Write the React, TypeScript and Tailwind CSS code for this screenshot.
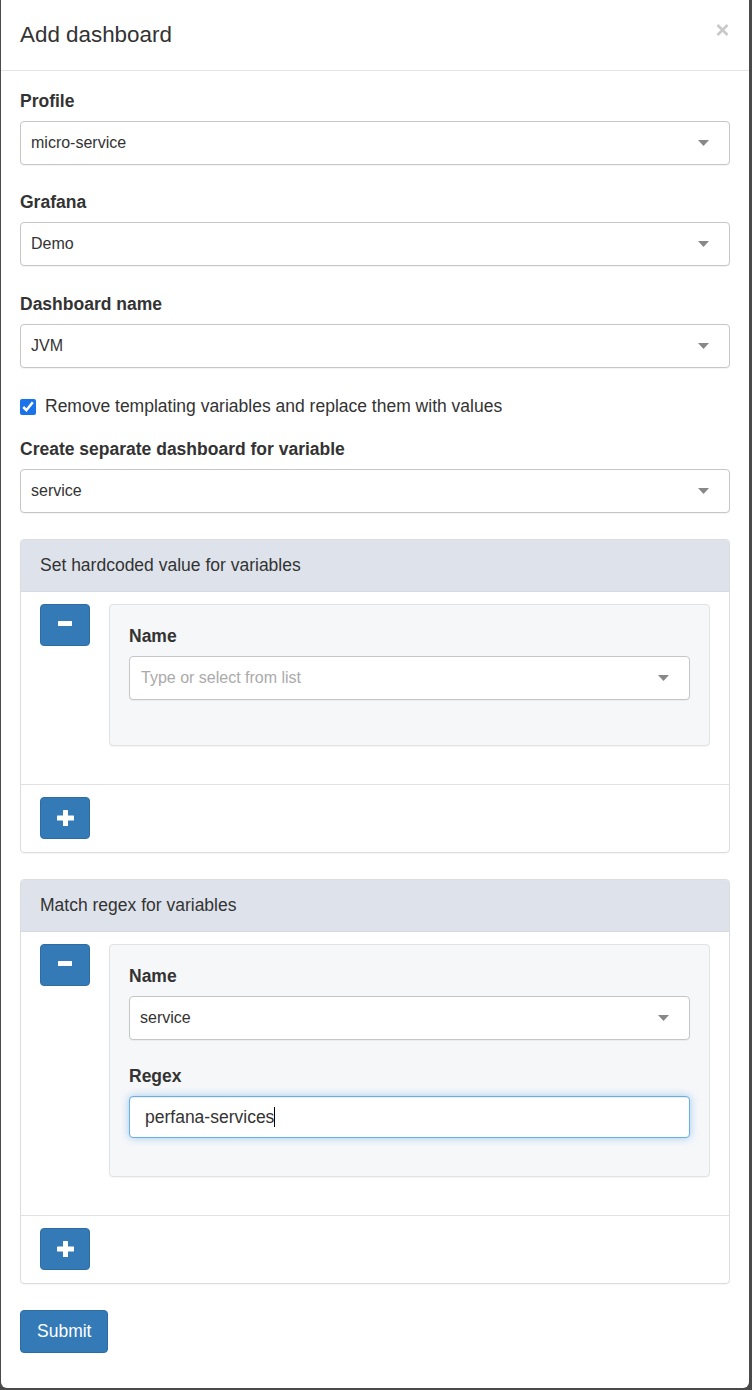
import type { ReactNode } from 'react';

const Caret = () => (
  <svg width="11" height="6" viewBox="0 0 11 6" className="shrink-0">
    <path d="M0 0h11L5.5 6z" fill="#888" />
  </svg>
);

const Select = ({ value, placeholder }: { value?: string; placeholder?: string }) => (
  <div className="flex h-[44px] items-center justify-between rounded-[4px] border border-[#c6c6c6] bg-white pl-[10px] pr-[20px] text-[16px] shadow-[0_1px_1px_rgba(0,0,0,0.05)]">
    {value ? (
      <span className="text-[#333]">{value}</span>
    ) : (
      <span className="pl-px text-[#aaa]">{placeholder}</span>
    )}
    <Caret />
  </div>
);

const Field = ({
  label,
  className,
  children,
}: {
  label: string;
  className?: string;
  children: ReactNode;
}) => (
  <div className={className}>
    <label className="mb-[7px] block text-[17.5px] font-bold leading-[25px] text-[#333]">
      {label}
    </label>
    {children}
  </div>
);

const IconButton = ({ kind }: { kind: 'plus' | 'minus' }) => (
  <button className="flex h-[42px] w-[50px] shrink-0 items-center justify-center rounded-[4px] border border-[#2e6da4] bg-[#337ab7]">
    {kind === 'plus' ? (
      <svg width="17" height="16" viewBox="0 0 17 16">
        <rect x="6" y="0" width="5" height="16" rx="0.5" fill="#fff" />
        <rect x="0" y="5.5" width="17" height="5" rx="0.5" fill="#fff" />
      </svg>
    ) : (
      <svg width="14" height="5" viewBox="0 0 14 5" className="-mt-[3px]">
        <rect x="0" y="0" width="14" height="5" rx="0.5" fill="#fff" />
      </svg>
    )}
  </button>
);

const Panel = ({ title, children }: { title: string; children: ReactNode }) => (
  <div className="mb-[26px] rounded-[4px] border border-[#dcdcdc] shadow-[0_1px_1px_rgba(0,0,0,0.04)]">
    <div className="flex h-[52px] items-center rounded-t-[3px] border-b border-[#d6dbe2] bg-[#dee3eb] px-[19px] text-[17.5px] text-[#333]">
      {title}
    </div>
    <div className="flex gap-[19px] px-[19px] pb-[38px] pt-[12px]">
      <IconButton kind="minus" />
      <div className="flex-1 rounded-[4px] border border-[#e2e2e2] bg-[#f6f7f9] px-[19px] pb-[19px] pt-[19px] shadow-[0_1px_1px_rgba(0,0,0,0.04)]">
        {children}
      </div>
    </div>
    <div className="border-t border-[#e2e2e2] px-[19px] pb-[13px] pt-[12px]">
      <IconButton kind="plus" />
    </div>
  </div>
);

export default function App() {
  return (
    <div className="h-[1390px] overflow-hidden bg-[#4a4a4a] pl-px font-['Liberation_Sans',Arial,sans-serif] text-[#333]">
      <div className="w-[748px] rounded-b-[6px] bg-white">
        <div className="flex h-[71px] items-center justify-between border-b border-[#e5e5e5] pl-[19px] pr-[20px]">
          <h4 className="text-[22.4px] leading-[30px] text-[#333]">Add dashboard</h4>
          <svg width="13" height="12" viewBox="0 0 13 12" className="-mt-[11px]">
            <path d="M1.5 1 11.5 11M11.5 1 1.5 11" stroke="#c9c9c9" strokeWidth="2.6" />
          </svg>
        </div>

        <div className="px-[19px] pb-[35px] pt-[18px]">
          <Field label="Profile" className="mb-[25px]">
            <Select value="micro-service" />
          </Field>
          <Field label="Grafana" className="mb-[26px]">
            <Select value="Demo" />
          </Field>
          <Field label="Dashboard name" className="mb-[26px]">
            <Select value="JVM" />
          </Field>

          <label className="mb-[18px] flex h-[25px] items-center gap-[9px] text-[17.5px] leading-[25px]">
            <input type="checkbox" defaultChecked className="h-4 w-4 accent-[#1a73e8]" />
            Remove templating variables and replace them with values
          </label>

          <Field label="Create separate dashboard for variable" className="mb-[26px]">
            <Select value="service" />
          </Field>

          <Panel title="Set hardcoded value for variables">
            <Field label="Name" className="mb-[26px]">
              <Select placeholder="Type or select from list" />
            </Field>
          </Panel>

          <Panel title="Match regex for variables">
            <Field label="Name" className="mb-[24px]">
              <Select value="service" />
            </Field>
            <Field label="Regex" className="mb-[19px]">
              <div className="flex h-[42px] items-center rounded-[4px] border border-[#66afe9] bg-white pl-[15px] text-[17.5px] shadow-[inset_0_1px_1px_rgba(0,0,0,0.075),0_0_8px_rgba(102,175,233,0.6)]">
                <span>perfana-services</span>
                <span className="h-[20px] w-px bg-black" />
              </div>
            </Field>
          </Panel>

          <button className="h-[43px] rounded-[4px] border border-[#2e6da4] bg-[#337ab7] px-[16px] text-[17.5px] leading-[25px] text-white">
            Submit
          </button>
        </div>
      </div>
    </div>
  );
}
